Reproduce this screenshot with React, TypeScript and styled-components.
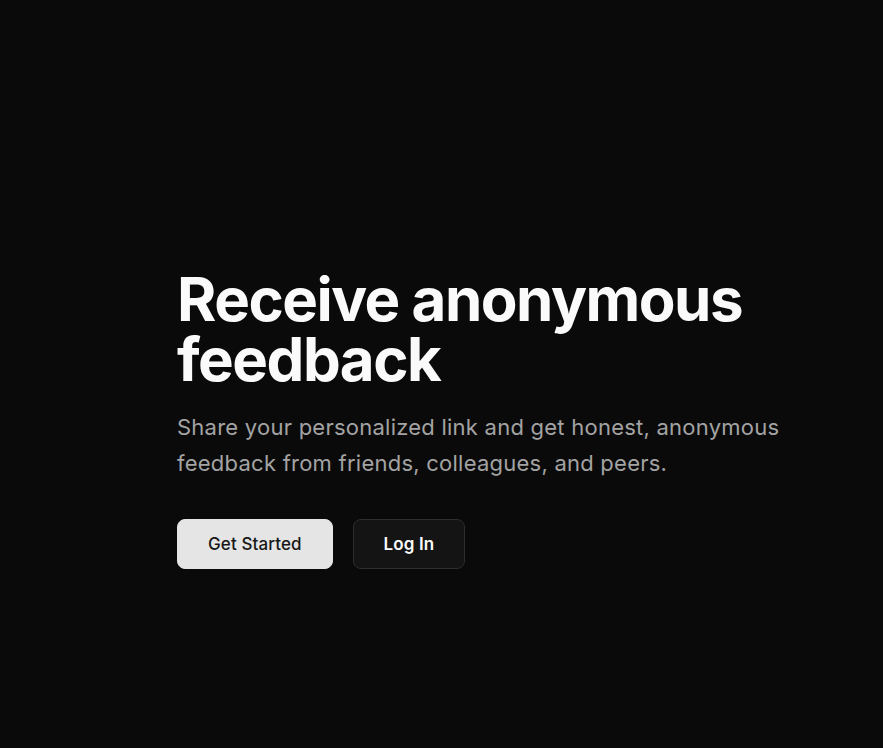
import React from "react";
import styled, { createGlobalStyle } from "styled-components";

const Global = createGlobalStyle`
  html, body { margin: 0; padding: 0; background: #0a0a0a; }
  body { font-family: Inter, "Noto Sans", sans-serif; -webkit-font-smoothing: antialiased; }
  * { box-sizing: border-box; }
`;

const Page = styled.main`
  min-height: 748px;
  background: #0a0a0a;
  padding: 269px 0 0 177px;
`;

const Hero = styled.section`
  display: flex;
  flex-direction: column;
  align-items: flex-start;
`;

const Title = styled.h1`
  margin: 0;
  font-size: 60px;
  line-height: 60px;
  font-weight: 700;
  letter-spacing: -1.5px;
  color: #fafafa;
  max-width: 640px;
`;

const Lead = styled.p`
  margin: 20px 0 0;
  font-size: 22px;
  line-height: 36px;
  letter-spacing: 0.24px;
  color: #a3a3a3;
  max-width: 660px;
`;

const Actions = styled.div`
  display: flex;
  gap: 20px;
  margin-top: 38px;
`;

const Button = styled.button<{ $primary?: boolean }>`
  height: 50px;
  padding: 0 30px;
  border-radius: 8px;
  font-family: Inter, sans-serif;
  font-size: 17px;
  letter-spacing: 0.1px;
  font-weight: ${(p) => (p.$primary ? 500 : 600)};
  cursor: pointer;
  background: ${(p) => (p.$primary ? "#e5e5e5" : "#141414")};
  color: ${(p) => (p.$primary ? "#171717" : "#fafafa")};
  border: 1px solid ${(p) => (p.$primary ? "#e5e5e5" : "#2e2e2e")};
`;

export default function App() {
  return (
    <>
      <Global />
      <Page>
        <Hero>
          <Title>Receive anonymous feedback</Title>
          <Lead>
            Share your personalized link and get honest, anonymous feedback from friends, colleagues, and peers.
          </Lead>
          <Actions>
            <Button $primary>Get Started</Button>
            <Button>Log In</Button>
          </Actions>
        </Hero>
      </Page>
    </>
  );
}
